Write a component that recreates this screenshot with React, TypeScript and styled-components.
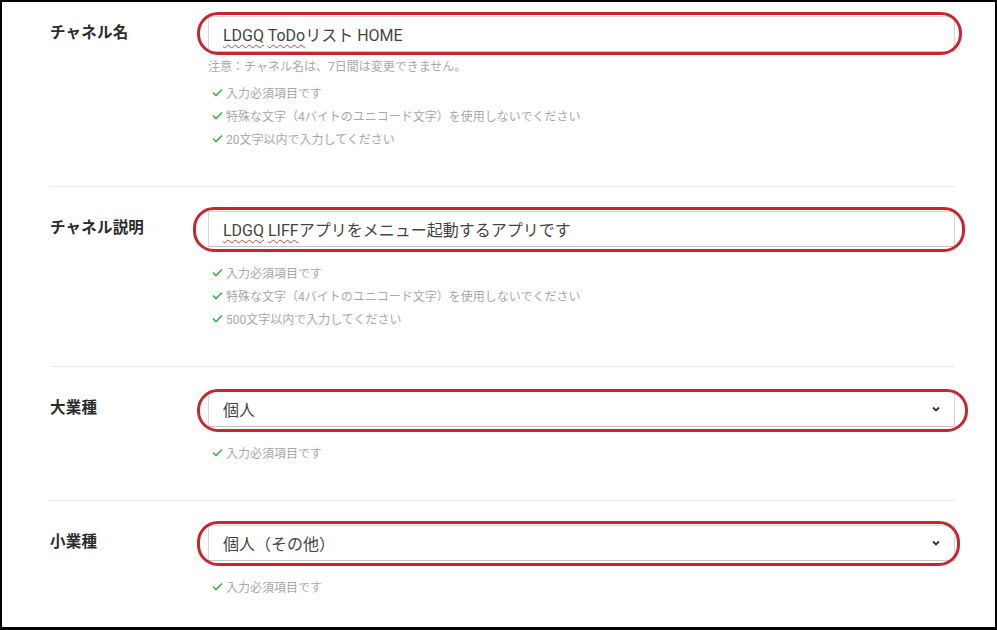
import React from "react";
import styled, { createGlobalStyle } from "styled-components";

const Global = createGlobalStyle`
  html, body { margin: 0; padding: 0; background: #fff; }
  body { font-family: Roboto, "Noto Sans CJK JP", sans-serif; }
  * { box-sizing: border-box; }
`;

const Frame = styled.div`
  width: 997px;
  height: 630px;
  border-style: solid;
  border-color: #000;
  border-width: 2px 2px 3px 2px;
  background: #fff;
  overflow: hidden;
`;

const Form = styled.div`
  padding: 0 40px 0 48px;
`;

const Section = styled.section<{ $first?: boolean; $last?: boolean }>`
  display: grid;
  grid-template-columns: 158px 1fr;
  align-items: start;
  padding-top: ${(p) => (p.$first ? "14px" : "24px")};
  padding-bottom: 36px;
  border-bottom: ${(p) => (p.$last ? "none" : "1px solid #ebebeb")};
`;

const Label = styled.div`
  height: 36px;
  display: flex;
  align-items: center;
  font-size: 15.5px;
  font-weight: 700;
  color: #2b2b2b;
  letter-spacing: 0.2px;
  margin-top: -3px;
`;

const FieldCol = styled.div`
  display: flex;
  flex-direction: column;
`;

const FieldBox = styled.div`
  position: relative;
`;

const InputBox = styled.div`
  height: 36px;
  border: 1px solid #d6d6d6;
  border-bottom-color: #c4c4c4;
  background: #fff;
  display: flex;
  align-items: center;
  justify-content: space-between;
  padding: 0 14px 0 14px;
  font-size: 16px;
  color: #444;
  white-space: nowrap;
`;

const Spell = styled.span`
  text-decoration: underline wavy #d23c3c;
  text-decoration-thickness: 1px;
  text-underline-offset: 3px;
`;

const Chevron = styled.svg`
  width: 8px;
  height: 6px;
`;

const Annotation = styled.div<{ $l: number; $r: number; $t: number; $b: number }>`
  position: absolute;
  left: ${(p) => -p.$l}px;
  right: ${(p) => -p.$r}px;
  top: ${(p) => -p.$t}px;
  bottom: ${(p) => -p.$b}px;
  border: 3px solid #c8262f;
  border-radius: 21px;
  pointer-events: none;
`;

const Note = styled.div`
  margin-top: 5px;
  font-size: 12px;
  line-height: 20px;
  color: #a8a8a8;
`;

const CheckList = styled.ul<{ $afterNote?: boolean }>`
  list-style: none;
  margin: ${(p) => (p.$afterNote ? "4px" : "14px")} 0 0 0;
  padding: 0;
`;

const CheckItem = styled.li`
  display: flex;
  align-items: center;
  gap: 3px;
  padding-left: 4px;
  height: 23px;
  font-size: 12px;
  color: #a8a8a8;
`;

const CheckIcon = () => (
  <svg width="11" height="9" viewBox="0 0 11 9">
    <polyline points="1,4.5 4,7.5 10,1.5" fill="none" stroke="#3fae49" strokeWidth="1.6" />
  </svg>
);

type Ann = { l: number; r: number; t: number; b: number };

const Field = ({
  label,
  value,
  select,
  note,
  checks,
  ann,
  first,
  last,
}: {
  label: string;
  value: React.ReactNode;
  select?: boolean;
  note?: string;
  checks: string[];
  ann: Ann;
  first?: boolean;
  last?: boolean;
}) => (
  <Section $first={first} $last={last}>
    <Label>{label}</Label>
    <FieldCol>
      <FieldBox>
        <InputBox>
          <span>{value}</span>
          {select && (
            <Chevron viewBox="0 0 8 6">
              <polyline points="1,1.5 4,4.5 7,1.5" fill="none" stroke="#333" strokeWidth="1.8" />
            </Chevron>
          )}
        </InputBox>
        <Annotation $l={ann.l} $r={ann.r} $t={ann.t} $b={ann.b} />
      </FieldBox>
      {note && <Note>{note}</Note>}
      <CheckList $afterNote={!!note}>
        {checks.map((c) => (
          <CheckItem key={c}>
            <CheckIcon />
            <span>{c}</span>
          </CheckItem>
        ))}
      </CheckList>
    </FieldCol>
  </Section>
);

export default function App() {
  return (
    <>
      <Global />
      <Frame>
        <Form>
          <Field
            first
            label="チャネル名"
            value={
              <>
                <Spell>LDGQ</Spell> <Spell>ToDo</Spell>リスト HOME
              </>
            }
            note="注意：チャネル名は、7日間は変更できません。"
            checks={[
              "入力必須項目です",
              "特殊な文字（4バイトのユニコード文字）を使用しないでください",
              "20文字以内で入力してください",
            ]}
            ann={{ l: 11, r: 7, t: 4, b: 3 }}
          />
          <Field
            label="チャネル説明"
            value={
              <>
                <Spell>LDGQ</Spell> <Spell>LIFF</Spell>アプリをメニュー起動するアプリです
              </>
            }
            checks={[
              "入力必須項目です",
              "特殊な文字（4バイトのユニコード文字）を使用しないでください",
              "500文字以内で入力してください",
            ]}
            ann={{ l: 15, r: 10, t: 4, b: 5 }}
          />
          <Field
            label="大業種"
            value="個人"
            select
            checks={["入力必須項目です"]}
            ann={{ l: 11, r: 13, t: 2, b: 5 }}
          />
          <Field
            last
            label="小業種"
            value="個人（その他）"
            select
            checks={["入力必須項目です"]}
            ann={{ l: 11, r: 5, t: 4, b: 5 }}
          />
        </Form>
      </Frame>
    </>
  );
}
